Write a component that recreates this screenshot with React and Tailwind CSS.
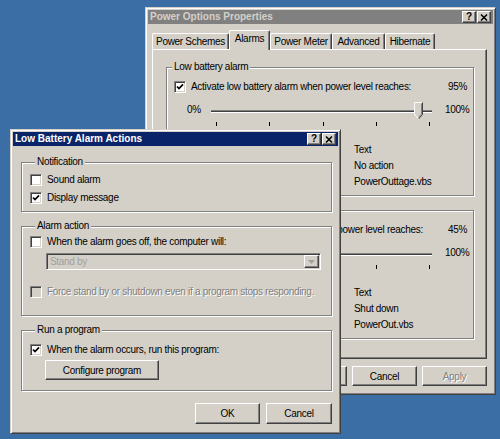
import React from "react";

const winEdge =
  "border border-t-[#d4d0c8] border-l-[#d4d0c8] border-r-[#404040] border-b-[#404040] shadow-[inset_1px_1px_0_#fff,inset_-1px_-1px_0_#808080]";
const raised =
  "border border-t-white border-l-white border-r-[#404040] border-b-[#404040] shadow-[inset_-1px_-1px_0_#808080]";
const disabledText = "text-[#808080] [text-shadow:1px_1px_0_#fff]";

function TitleBar({ title, active }) {
  return (
    <div
      className={`h-[14px] flex items-center justify-between pl-[2px] pr-[2px] ${
        active ? "bg-[#0a246a] text-white" : "bg-[#808080] text-[#d4d0c8]"
      }`}
    >
      <span className="font-bold text-[10px] leading-[14px] tracking-normal">{title}</span>
      <div className="flex gap-[1px]">
        <span className={`w-[14px] h-[12px] bg-[#d4d0c8] ${raised} flex items-center justify-center text-black font-bold text-[10px] leading-none`}>
          ?
        </span>
        <span className={`w-[14px] h-[12px] bg-[#d4d0c8] ${raised} flex items-center justify-center`}>
          <svg width="8" height="7" viewBox="0 0 8 7">
            <path d="M1 0.5 L7 6.5 M7 0.5 L1 6.5" stroke="#000" strokeWidth="1.5" />
          </svg>
        </span>
      </div>
    </div>
  );
}

function Check({ checked, disabled }) {
  return (
    <span
      className={`w-[12px] h-[12px] shrink-0 flex items-center justify-center border border-t-[#808080] border-l-[#808080] border-r-white border-b-white shadow-[inset_1px_1px_0_#404040,inset_-1px_-1px_0_#d4d0c8] ${
        disabled ? "bg-[#d4d0c8]" : "bg-white"
      }`}
    >
      {checked && (
        <svg width="8" height="8" viewBox="0 0 8 8">
          <path d="M1 3.5 L3 5.6 L7 1.4" stroke="#000" strokeWidth="1.7" fill="none" />
        </svg>
      )}
    </span>
  );
}

function CheckRow({ checked, disabled, children, className = "" }) {
  return (
    <div className={`flex items-center gap-[5px] h-[13px] leading-[13px] ${className}`}>
      <Check checked={checked} disabled={disabled} />
      <span className={disabled ? disabledText : ""}>{children}</span>
    </div>
  );
}

function Group({ label, className = "", children }) {
  return (
    <fieldset
      className={`border border-[#808080] shadow-[inset_1px_1px_0_#fff,1px_1px_0_#fff] ${className}`}
    >
      <legend className="ml-[5px] px-[2px] leading-[12px] bg-[#d4d0c8]">{label}</legend>
      {children}
    </fieldset>
  );
}

function Button({ children, className = "", disabled }) {
  return (
    <div
      className={`bg-[#d4d0c8] ${raised} flex items-center justify-center ${
        disabled ? disabledText : ""
      } ${className}`}
    >
      {children}
    </div>
  );
}

function Slider({ value }) {
  const left = 5 + (value / 100) * 213 - 4.5;
  return (
    <div>
      <div className="flex items-start pl-[20px] mt-[8px]">
        <span className="w-[24px] leading-[16px]">0%</span>
        <div className="relative w-[221px] h-[18px]">
          <div className="mt-[8px] h-[3px] bg-[#404040] border-t border-t-[#808080] border-b border-b-white" />
          <svg
            className="absolute top-0"
            style={{ left }}
            width="9"
            height="18"
            viewBox="0 0 9 18"
          >
            <path d="M0.5 0.5 H8.5 V12.5 L4.5 17 L0.5 12.5 Z" fill="#d4d0c8" />
            <polyline points="0.5,12.5 0.5,0.5 8,0.5" stroke="#fff" fill="none" />
            <polyline points="8.5,0.5 8.5,12.5 4.5,17" stroke="#404040" fill="none" />
            <polyline points="7.5,1.5 7.5,12 4.5,15.4" stroke="#808080" fill="none" />
            <line x1="0.5" y1="12.5" x2="4.2" y2="16.6" stroke="#fff" />
          </svg>
        </div>
        <span className="ml-[13px] leading-[16px]">100%</span>
      </div>
      <div className="ml-[44px] w-[221px] pl-[5px] pr-[2px] mt-[2px] h-[4px] flex justify-between">
        {[0, 1, 2, 3, 4].map((i) => (
          <span key={i} className="w-[1px] h-[4px] bg-black" />
        ))}
      </div>
    </div>
  );
}

function AlarmGroup({ label, text, value, rows, className = "" }) {
  return (
    <Group label={label} className={`pb-[5px] ${className}`}>
      <div className="flex items-center justify-between pl-[7px] pr-[6px] mt-[6px]">
        <CheckRow checked>{text}</CheckRow>
        <span>{value}%</span>
      </div>
      <Slider value={value} />
      <div className="mt-[16px] flex flex-col pl-[187px] leading-[16px]">
        {rows.map((v) => (
          <span key={v}>{v}</span>
        ))}
      </div>
    </Group>
  );
}

function PowerOptions() {
  const tabs = [
    ["Power Schemes", "w-[77px]"],
    ["Alarms", "w-[41px]"],
    ["Power Meter", "w-[62px]"],
    ["Advanced", "w-[53px]"],
    ["Hibernate", "w-[50px]"],
  ];
  return (
    <div className={`absolute left-[145px] top-[7px] w-[351px] h-[388px] bg-[#d4d0c8] p-[2px] flex flex-col ${winEdge}`}>
      <TitleBar title="Power Options Properties" />
      <div className="flex items-end h-[19px] mt-[6px] ml-[4px]">
        {tabs.map(([name, w]) =>
          name === "Alarms" ? (
            <div
              key={name}
              className={`${w} relative z-10 h-[20px] -mb-[1px] bg-[#d4d0c8] border-t border-l border-t-white border-l-white border-r border-r-[#404040] rounded-t-[2px] shadow-[inset_-1px_0_0_#808080] text-center leading-[16px]`}
            >
              {name}
            </div>
          ) : (
            <div
              key={name}
              className={`${w} h-[16px] border-t border-l border-t-white border-l-white border-r border-r-[#404040] rounded-t-[2px] shadow-[inset_-1px_0_0_#808080] text-center leading-[15px]`}
            >
              {name}
            </div>
          )
        )}
      </div>
      <div className={`h-[310px] ml-[4px] mr-[6px] pt-[11px] pl-[13px] pr-[12px] ${raised}`}>
        <AlarmGroup
          label="Low battery alarm"
          text="Activate low battery alarm when power level reaches:"
          value={95}
          rows={["Text", "No action", "PowerOuttage.vbs"]}
        />
        <AlarmGroup
          label="Critical battery alarm"
          className="mt-[8px]"
          text="Activate critical battery alarm when power level reaches:"
          value={45}
          rows={["Text", "Shut down", "PowerOut.vbs"]}
        />
      </div>
      <div className="flex justify-end gap-[5px] mt-[7px] mr-[6px]">
        <Button className="w-[65px] h-[20px]">OK</Button>
        <Button className="w-[65px] h-[20px]">Cancel</Button>
        <Button className="w-[65px] h-[20px]" disabled>
          Apply
        </Button>
      </div>
    </div>
  );
}

function AlarmActions() {
  return (
    <div className={`absolute left-[10px] top-[129px] w-[331px] h-[305px] bg-[#d4d0c8] p-[2px] flex flex-col ${winEdge}`}>
      <TitleBar title="Low Battery Alarm Actions" active />
      <div className="pl-[8px] pr-[6px]">
        <Group label="Notification" className="mt-[10px] pl-[8px] pb-[7px]">
          <CheckRow className="mt-[5px]">Sound alarm</CheckRow>
          <CheckRow checked className="mt-[5px]">
            Display message
          </CheckRow>
        </Group>

        <Group label="Alarm action" className="mt-[8px] pl-[8px] pb-[17px]">
          <CheckRow className="mt-[3px]">When the alarm goes off, the computer will:</CheckRow>
          <div className="mt-[5px] ml-[16px] mr-[10px] h-[17px] flex items-center border border-t-[#808080] border-l-[#808080] border-r-white border-b-white shadow-[inset_1px_1px_0_#404040,inset_-1px_-1px_0_#d4d0c8] bg-[#d4d0c8] pl-[3px] pr-[1px]">
            <span className="flex-1 text-[#a0a0a0]">Stand by</span>
            <span className={`w-[15px] h-[13px] ${raised} flex items-center justify-center`}>
              <svg width="7" height="4" viewBox="0 0 7 4">
                <path d="M0 0 H7 L3.5 4 Z" fill="#a0a0a0" />
              </svg>
            </span>
          </div>
          <CheckRow disabled className="mt-[15px]">
            Force stand by or shutdown even if a program stops responding.
          </CheckRow>
        </Group>

        <Group label="Run a program" className="mt-[8px] pl-[8px] pb-[10px]">
          <CheckRow checked className="mt-[7px]">
            When the alarm occurs, run this program:
          </CheckRow>
          <Button className="mt-[4px] ml-[15px] w-[114px] h-[20px]">Configure program</Button>
        </Group>

        <div className="flex justify-end gap-[6px] mt-[12px]">
          <Button className="w-[65px] h-[21px]">OK</Button>
          <Button className="w-[66px] h-[21px]">Cancel</Button>
        </div>
      </div>
    </div>
  );
}

export default function App() {
  return (
    <div className="relative w-[500px] h-[439px] overflow-hidden bg-[#3a6ea5] font-['Liberation_Sans',Arial,sans-serif] text-[10px] tracking-[-0.3px] text-black">
      <PowerOptions />
      <AlarmActions />
    </div>
  );
}
